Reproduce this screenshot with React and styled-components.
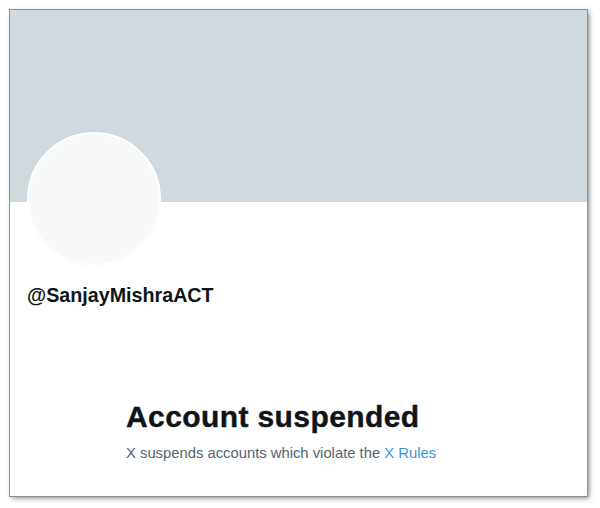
import React from "react"
import styled, { createGlobalStyle } from "styled-components"

const GlobalStyle = createGlobalStyle`
    html, body {
        margin: 0;
        padding: 0;
        background: #ffffff;
        font-family: "Liberation Sans", Arial, sans-serif;
    }
`

const Page = styled.div`
    width: 600px;
    height: 508px;
    padding: 10px 0 0 10px;
    box-sizing: border-box;
`

const Card = styled.div`
    width: 577px;
    height: 486px;
    background: #ffffff;
    box-shadow: 0 0 0 1px #8f8f8f, 2px 2px 5px rgba(0, 0, 0, 0.5);
    display: flex;
    flex-direction: column;
    overflow: hidden;
`

const Banner = styled.div`
    height: 192px;
    background: #cfd9de;
    flex-shrink: 0;
`

const Profile = styled.div`
    padding-left: 17px;
    display: flex;
    flex-direction: column;
    align-items: flex-start;
`

const Avatar = styled.div`
    width: 130px;
    height: 130px;
    margin-top: -70px;
    border-radius: 50%;
    background: #f7f9f9;
    border: 2px solid #ffffff;
    box-shadow: 0 0 1px rgba(0, 0, 0, 0.08);
`

const Handle = styled.div`
    margin-top: 17px;
    font-size: 19.7px;
    line-height: 24px;
    font-weight: 700;
    color: #0f1419;
`

const Notice = styled.div`
    margin: 92px 0 0 116px;
    display: flex;
    flex-direction: column;
    gap: 8px;
`

const Title = styled.h2`
    margin: 0;
    font-size: 30px;
    line-height: 36px;
    font-weight: 700;
    letter-spacing: 0.4px;
    color: #0f1419;
    -webkit-text-stroke: 0.4px #0f1419;
`

const Sub = styled.p`
    margin: 0;
    font-size: 14.8px;
    line-height: 20px;
    color: #536471;
`

const RulesLink = styled.a`
    color: #3a97dc;
    text-decoration: none;
`

export default function App() {
    return (
        <>
            <GlobalStyle />
            <Page>
                <Card>
                    <Banner />
                    <Profile>
                        <Avatar />
                        <Handle>@SanjayMishraACT</Handle>
                    </Profile>
                    <Notice>
                        <Title>Account suspended</Title>
                        <Sub>
                            X suspends accounts which violate the <RulesLink href="#">X Rules</RulesLink>
                        </Sub>
                    </Notice>
                </Card>
            </Page>
        </>
    )
}
